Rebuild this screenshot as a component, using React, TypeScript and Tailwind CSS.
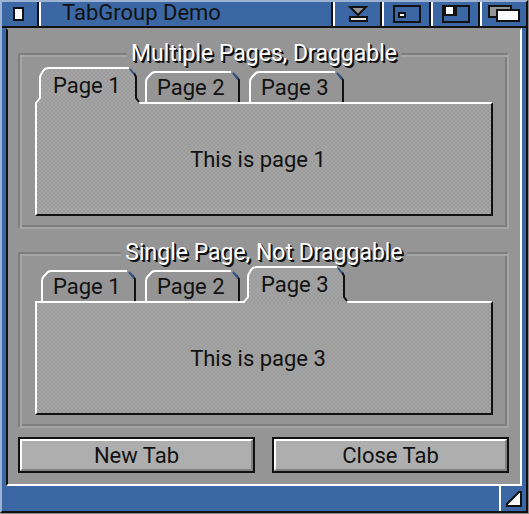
import { useState, type ReactNode } from "react";

const EDGE = "#111111";

function Dither({ id }: { id: string }) {
  return (
    <pattern id={id} width="4" height="4" patternUnits="userSpaceOnUse">
      <rect width="4" height="4" fill="#a5a5a5" />
      <path d="M0 0h2v2h-2zM2 2h2v2h-2z" fill="#9b9b9b" />
    </pattern>
  );
}

function TabShape({ active, id }: { active: boolean; id: string }) {
  if (active) {
    return (
      <svg className="absolute -left-1 bottom-[-2px] z-10" width="110" height="38" viewBox="0 0 110 38" aria-hidden="true">
        <defs>
          <Dither id={id} />
        </defs>
        <path d="M4 38V35L7 32V12L15 3H96L103 10V33L107 38Z" fill={`url(#${id})`} />
        <path d="M3 38V37L7 32V12Q7 9 9 7L10 5Q12 2 16 2H96" fill="none" stroke="#fff" strokeWidth="2" />
        <path d="M101 7L103 11V32L106 36" fill="none" stroke={EDGE} strokeWidth="2" />
        <path d="M97 3L101 8" stroke="#2f5387" strokeWidth="2" />
      </svg>
    );
  }
  return (
    <svg className="absolute bottom-0 left-0" width="104" height="32" viewBox="0 0 104 32" aria-hidden="true">
      <path d="M5 32V12Q5 9 7 7L9 5Q11 2 14 2H90" fill="none" stroke="#fff" strokeWidth="2" />
      <path d="M95 6L98 10V32" fill="none" stroke={EDGE} strokeWidth="2" />
      <path d="M92 3L97 9" stroke="#2f5387" strokeWidth="2" />
    </svg>
  );
}

function TabGroup({ title, name, initial }: { title: string; name: string; initial: number }) {
  const [page, setPage] = useState(initial);
  return (
    <fieldset className="min-w-0 border-2 border-b-[#a5a5a5] border-l-[#7e7e7e] border-r-[#a5a5a5] border-t-[#7e7e7e] pb-[11px] pl-[15px] pr-[14px] pt-[3px] shadow-[inset_2px_2px_0_#a5a5a5,inset_-2px_-2px_0_#7e7e7e]">
      <legend className="mx-auto bg-[#959595] px-1 text-[23px] leading-5 text-white [text-shadow:1px_1px_0_#111,2px_2px_0_#111]">
        {title}
      </legend>
      <div role="tablist" aria-label={title} className="flex h-[35px] items-end pl-[2px]">
        {[1, 2, 3].map((n) => (
          <button
            key={n}
            type="button"
            role="tab"
            id={`${name}-tab-${n}`}
            aria-controls={`${name}-panel`}
            aria-selected={n === page}
            onClick={() => setPage(n)}
            className="relative h-8 w-[104px] shrink-0 text-left"
          >
            <TabShape active={n === page} id={`${name}-fill-${n}`} />
            <span className={n === page ? "relative z-20 block py-[2px] pl-4 leading-7" : "relative block pl-4 pt-1 leading-7"}>
              Page {n}
            </span>
          </button>
        ))}
      </div>
      <div
        role="tabpanel"
        id={`${name}-panel`}
        aria-labelledby={`${name}-tab-${page}`}
        className="flex h-[114px] items-center justify-center border-2 border-b-[#111] border-l-white border-r-[#111] border-t-white bg-[conic-gradient(#a5a5a5_25%,#9b9b9b_0_50%,#a5a5a5_0_75%,#9b9b9b_0)] bg-[length:4px_4px]"
      >
        <p className="pr-3">This is page {page}</p>
      </div>
    </fieldset>
  );
}

function PushButton({ label }: { label: string }) {
  return (
    <button type="button" className="h-9 flex-1 border-2 border-[#111] bg-[#aeaeae] text-[22px]">
      <span className="flex h-full items-center justify-center border-2 border-b-[#828282] border-l-white border-r-[#828282] border-t-white">
        {label}
      </span>
    </button>
  );
}

function Gadget({ label, children }: { label: string; children: ReactNode }) {
  return (
    <button type="button" aria-label={label} className="flex w-[49px] items-center justify-center border-l-2 border-r-2 border-l-white border-r-[#111]">
      {children}
    </button>
  );
}

export default function App() {
  return (
    <main className="flex flex-col border-b border-r border-[#8a8a8a] font-['Roboto','Liberation_Sans',sans-serif] text-[22px] text-[#111]">
      <div className="border-2 border-b-[#111] border-l-[#9db3d3] border-r-[#111] border-t-[#9db3d3] bg-[#3b68a5]">
        <header className="flex h-[26px] border-b-2 border-[#111]">
          <button type="button" aria-label="Close" className="flex w-[37px] items-center border-r-2 border-[#111] pl-[11px]">
            <svg width="11" height="14" viewBox="0 0 11 14" aria-hidden="true">
              <rect x="1" y="1" width="9" height="12" fill="#fff" stroke={EDGE} strokeWidth="2" />
            </svg>
          </button>
          <h1 className="flex-1 border-l-2 border-r-2 border-l-white border-r-[#111] pl-[21px] text-[22px] leading-[22px]">TabGroup Demo</h1>
          <Gadget label="Iconify">
            <svg width="22" height="18" viewBox="0 0 22 18" aria-hidden="true">
              <path d="M3 2H19L11 10Z" fill="#959595" stroke={EDGE} strokeWidth="2" />
              <rect x="3" y="12" width="17" height="4" fill="#e8e8e0" stroke={EDGE} strokeWidth="2" />
            </svg>
          </Gadget>
          <Gadget label="Jump">
            <svg width="28" height="18" viewBox="0 0 28 18" aria-hidden="true">
              <rect x="1" y="1" width="26" height="16" fill="none" stroke={EDGE} strokeWidth="2" />
              <rect x="6" y="8" width="6" height="4" fill="#fff" stroke={EDGE} strokeWidth="2" />
            </svg>
          </Gadget>
          <Gadget label="Zoom">
            <svg width="28" height="18" viewBox="0 0 28 18" aria-hidden="true">
              <rect x="1" y="1" width="26" height="16" fill="none" stroke={EDGE} strokeWidth="2" />
              <path d="M1 1H15V11H1Z" fill={EDGE} />
              <path d="M4 2H11V9H4Z" fill="#fff" />
            </svg>
          </Gadget>
          <button type="button" aria-label="Depth" className="flex w-[46px] items-center justify-center border-l-2 border-white">
            <svg width="32" height="18" viewBox="0 0 32 18" aria-hidden="true">
              <rect x="1" y="1" width="22" height="11" fill="#959595" stroke={EDGE} strokeWidth="2" />
              <rect x="9" y="5" width="22" height="11" fill="#fff" stroke={EDGE} strokeWidth="2" />
            </svg>
          </button>
        </header>

        <div className="px-1">
          <div className="flex flex-col border-2 border-b-white border-l-[#111] border-r-white border-t-[#959595] bg-[#959595] pb-[11px] pl-[10px] pr-[11px] pt-[14px]">
            <div className="flex flex-col gap-[14px]">
              <TabGroup title="Multiple Pages, Draggable" name="multi" initial={1} />
              <TabGroup title="Single Page, Not Draggable" name="single" initial={3} />
            </div>
            <div className="mt-[9px] flex gap-[17px]">
              <PushButton label="New Tab" />
              <PushButton label="Close Tab" />
            </div>
          </div>
        </div>

        <footer className="flex h-[25px] justify-end">
          <button type="button" aria-label="Resize" className="flex w-[27px] items-center border-l-2 border-white pl-1">
            <svg width="18" height="18" viewBox="0 0 18 18" aria-hidden="true">
              <path d="M2 16V14L14 2H16V16Z" fill="#fff" stroke={EDGE} strokeWidth="2" />
            </svg>
          </button>
        </footer>
      </div>
    </main>
  );
}
